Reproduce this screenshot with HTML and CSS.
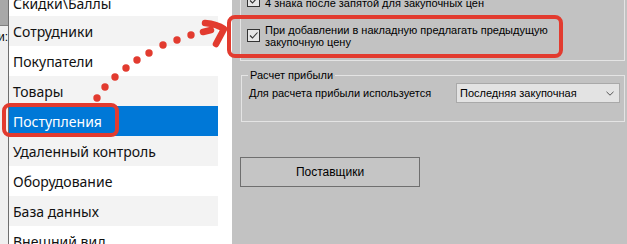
FILE: index.html
```html
<!DOCTYPE html>
<html lang="ru">
<head>
    <meta charset="UTF-8">
    <title>Настройки</title>
    <link rel="stylesheet" href="styles.css">
</head>
<body>
    <div class="screen">
        <div class="behind">
            <div class="behind-top"></div>
            <div class="behind-text">и:</div>
        </div>

        <div class="menu">
            <ul class="menu-list">
                <li class="menu-item">Скидки\Баллы</li>
                <li class="menu-item">Сотрудники</li>
                <li class="menu-item">Покупатели</li>
                <li class="menu-item">Товары</li>
                <li class="menu-item active">Поступления</li>
                <li class="menu-item">Удаленный контроль</li>
                <li class="menu-item">Оборудование</li>
                <li class="menu-item">База данных</li>
                <li class="menu-item">Внешний вид</li>
            </ul>
        </div>

        <div class="panel">
            <div class="options">
                <div class="check">
                    <span class="check-box">
                        <svg width="11" height="11" viewBox="0 0 11 11"><path d="M2 5.5 L4.5 8 L9.5 2.5" fill="none" stroke="#333" stroke-width="1.1"/></svg>
                    </span>
                    <span class="check-text">4 знака после запятой для закупочных цен</span>
                </div>
                <div class="check check-wrap">
                    <span class="check-box">
                        <svg width="11" height="11" viewBox="0 0 11 11"><path d="M2 5.5 L4.5 8 L9.5 2.5" fill="none" stroke="#333" stroke-width="1.1"/></svg>
                    </span>
                    <span class="check-text">При добавлении в накладную предлагать предыдущую<br>закупочную цену</span>
                </div>
            </div>

            <fieldset class="group">
                <legend>Расчет прибыли</legend>
                <div class="field-row">
                    <span>Для расчета прибыли используется</span>
                    <div class="select">
                        <span>Последняя закупочная</span>
                        <svg width="8" height="5" viewBox="0 0 8 5"><path d="M0.5 0.8 L4 4.2 L7.5 0.8" fill="none" stroke="#555" stroke-width="1"/></svg>
                    </div>
                </div>
            </fieldset>

            <button type="button" class="btn">Поставщики</button>
        </div>

        <!-- red annotations on top of the screenshot -->
        <div class="mark mark-check"></div>
        <div class="mark mark-item"></div>
        <svg class="arrow" width="627" height="244" viewBox="0 0 627 244">
            <g fill="#e23b2f">
                <circle cx="97" cy="98" r="3.7"/>
                <circle cx="105" cy="87" r="3.7"/>
                <circle cx="115" cy="77" r="3.7"/>
                <circle cx="126" cy="68" r="3.7"/>
                <circle cx="137" cy="60" r="3.7"/>
                <circle cx="149" cy="53" r="3.7"/>
                <circle cx="163" cy="45" r="3.7"/>
                <circle cx="177" cy="40" r="3.7"/>
                <circle cx="191" cy="35" r="3.7"/>
            </g>
            <path d="M203 32 L211 30 M205 23 Q217 24 224 29 L216 44" fill="none" stroke="#e23b2f" stroke-width="6.5" stroke-linecap="round" stroke-linejoin="round"/>
        </svg>
    </div>
</body>
</html>
```

FILE: styles.css
```css
body {
    margin: 0;
    background: #c2c2c2;
    font-family: "Liberation Sans", Arial, sans-serif;
    font-size: 11px;
    color: #000;
}

.screen {
    position: relative;
    display: flex;
    width: 627px;
    height: 244px;
    overflow: hidden;
}

/* strip of the window lying behind */
.behind {
    width: 8px;
    flex: none;
    background: #f0f0f0;
    border-right: 1px solid #6e6e6e;
    overflow: hidden;
}

.behind-top {
    height: 25px;
    background: #a8a8a8;
    border-bottom: 1px solid #808080;
}

.behind-text {
    display: flex;
    justify-content: flex-end;
    padding-top: 4px;
    font-size: 12px;
    white-space: nowrap;
}

/* left menu */
.menu {
    width: 223px;
    flex: none;
    background: #fff;
}

.menu-list {
    list-style: none;
    margin: -14px 0 0;
    padding: 0;
    width: 209px;
}

.menu-item {
    height: 30px;
    display: flex;
    align-items: center;
    padding-left: 4px;
    font-family: "Noto Sans", "Open Sans", sans-serif;
    font-size: 14px;
    color: #111;
}

.menu-item:first-child {
    padding-top: 4px;
    box-sizing: border-box;
}

.menu-item:nth-child(even) {
    background: #f3f3f3;
}

.menu-item.active {
    background: #0078d7;
    color: #fff;
}

/* right settings panel */
.panel {
    flex: 1;
    padding: 0 2px 0 8px;
}

.options {
    margin-top: -20px;
    height: 81px;
    padding: 13px 6px 0;
    border: 1px solid #e4e4e4;
    box-sizing: border-box;
}

.check {
    display: flex;
    align-items: flex-start;
    gap: 5px;
}

.check-text {
    margin-top: 3px;
    line-height: 13px;
}

.check-wrap {
    margin-top: 14px;
}

.check-wrap .check-text {
    margin-top: 0;
    line-height: 12px;
}

.check-wrap .check-box {
    margin-top: 5px;
}

.check-box {
    width: 13px;
    height: 13px;
    box-sizing: border-box;
    border: 1px solid #333;
    background: #e6e6e6;
    display: flex;
    align-items: center;
    justify-content: center;
    flex: none;
}

.group {
    margin: 8px 0 0 1px;
    padding: 1px 4px 18px 7px;
    border: 1px solid #e4e4e4;
}

.group legend {
    margin-left: -1px;
    padding: 0 2px;
    line-height: 13px;
}

.field-row {
    display: flex;
    justify-content: space-between;
    align-items: center;
}

.select {
    width: 164px;
    height: 20px;
    box-sizing: border-box;
    border: 1px solid #a9a9a9;
    background: #e3e3e3;
    display: flex;
    align-items: center;
    justify-content: space-between;
    padding: 0 5px 0 3px;
}

.btn {
    display: block;
    margin-top: 35px;
    width: 180px;
    height: 30px;
    border: 1px solid #6f6f6f;
    background: #c5c5c5;
    font-family: "Liberation Sans", Arial, sans-serif;
    font-size: 12px;
    color: #000;
    padding: 0;
}

/* annotations */
.mark {
    position: absolute;
    border: 4px solid #e23b2f;
    border-radius: 8px;
    box-sizing: border-box;
}

.mark-check {
    left: 227px;
    top: 15px;
    width: 336px;
    height: 43px;
}

.mark-item {
    left: 2px;
    top: 103px;
    width: 117px;
    height: 34px;
}

.arrow {
    position: absolute;
    left: 0;
    top: 0;
    pointer-events: none;
}
```
